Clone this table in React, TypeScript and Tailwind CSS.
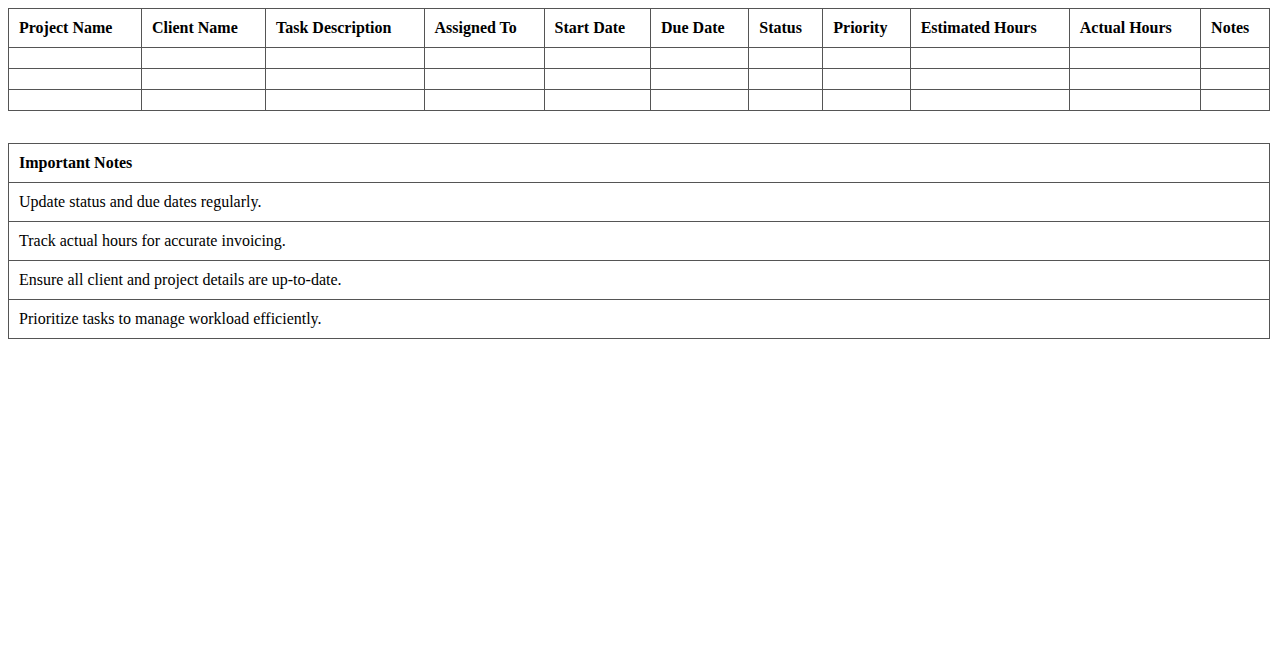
import React from "react";

const headers = [
  "Project Name",
  "Client Name",
  "Task Description",
  "Assigned To",
  "Start Date",
  "Due Date",
  "Status",
  "Priority",
  "Estimated Hours",
  "Actual Hours",
  "Notes",
];

const notes = [
  "Update status and due dates regularly.",
  "Track actual hours for accurate invoicing.",
  "Ensure all client and project details are up-to-date.",
  "Prioritize tasks to manage workload efficiently.",
];

export default function App() {
  return (
    <div
      className="p-2 bg-white text-black text-[16px] leading-normal min-h-[650px]"
      style={{ fontFamily: '"Liberation Serif", "Times New Roman", serif', lineHeight: "normal" }}
    >
      <table className="w-full table-auto border-collapse">
        <thead>
          <tr>
            {headers.map((h) => (
              <th key={h} className="border border-[#555] p-[10px] text-left font-bold">
                {h}
              </th>
            ))}
          </tr>
        </thead>
        <tbody>
          {[0, 1, 2].map((r) => (
            <tr key={r}>
              {headers.map((h) => (
                <td key={h} className="border border-[#555] p-[10px]"></td>
              ))}
            </tr>
          ))}
        </tbody>
      </table>

      <table className="w-full table-auto border-collapse mt-8">
        <thead>
          <tr>
            <th className="border border-[#555] p-[10px] text-left font-bold">Important Notes</th>
          </tr>
        </thead>
        <tbody>
          {notes.map((n) => (
            <tr key={n}>
              <td className="border border-[#555] p-[10px]">{n}</td>
            </tr>
          ))}
        </tbody>
      </table>
    </div>
  );
}
